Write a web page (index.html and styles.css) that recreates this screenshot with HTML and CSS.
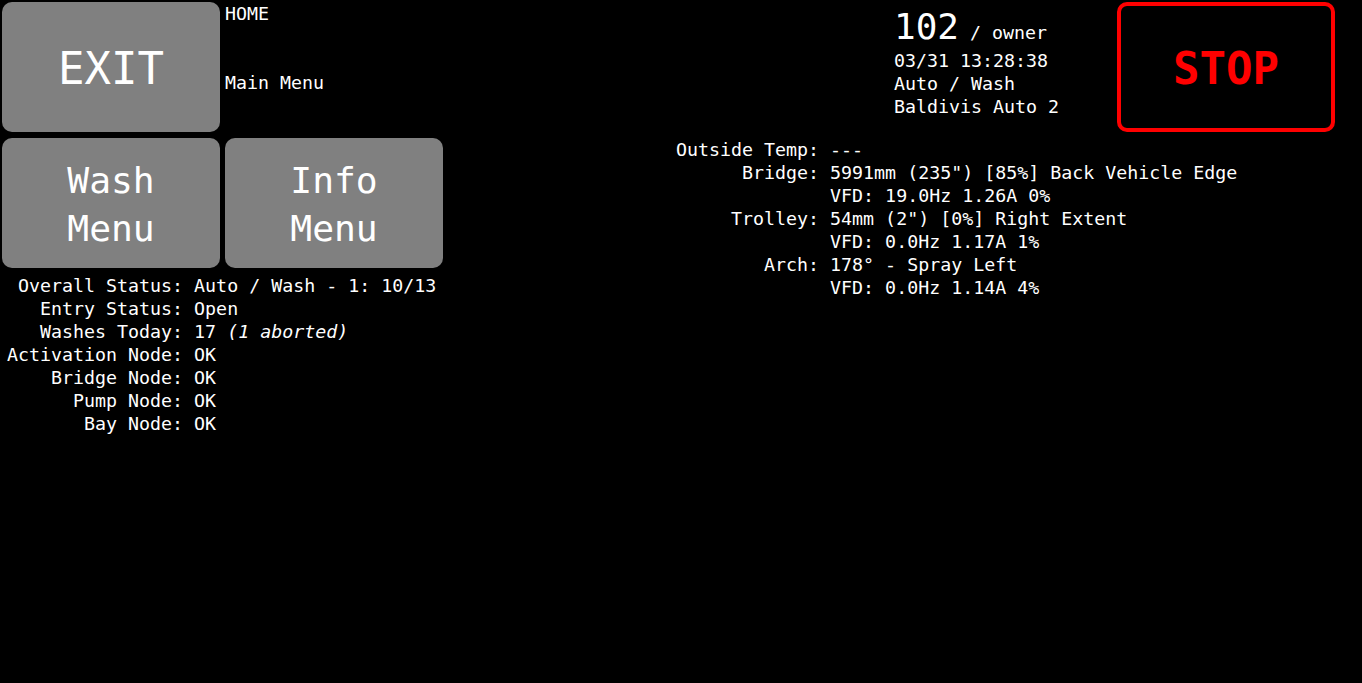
FILE: index.html
```html
<!DOCTYPE html>
<html lang="en">
  <head>
    <meta charset="UTF-8" />
    <meta name="viewport" content="width=device-width, initial-scale=1.0" />
    <title>Wash Bay - Home</title>
    <link rel="stylesheet" href="styles.css">
  </head>
  <body>
    <div class="screen">
      <button class="btn btn-big" id="exit">EXIT</button>

      <div class="crumbs">
        <div>HOME</div>
        <div class="crumb-sub">Main Menu</div>
      </div>

      <div class="ident">
        <div class="ident-top"><span class="bay-no">102</span> / owner</div>
        <div>03/31 13:28:38</div>
        <div>Auto / Wash</div>
        <div>Baldivis Auto 2</div>
      </div>

      <button class="btn btn-stop" id="stop">STOP</button>

      <button class="btn btn-menu">Wash<br />Menu</button>
      <button class="btn btn-menu">Info<br />Menu</button>

      <div class="readout readout-right">
        <div class="k">Outside Temp:</div><div>---</div>
        <div class="k">Bridge:</div><div>5991mm (235") [85%] Back Vehicle Edge</div>
        <div class="k"></div><div>VFD: 19.0Hz 1.26A 0%</div>
        <div class="k">Trolley:</div><div>54mm (2") [0%] Right Extent</div>
        <div class="k"></div><div>VFD: 0.0Hz 1.17A 1%</div>
        <div class="k">Arch:</div><div>178° - Spray Left</div>
        <div class="k"></div><div>VFD: 0.0Hz 1.14A 4%</div>
      </div>

      <div class="readout readout-left">
        <div class="k">Overall Status:</div><div>Auto / Wash - 1: 10/13</div>
        <div class="k">Entry Status:</div><div>Open</div>
        <div class="k">Washes Today:</div><div>17 <i>(1 aborted)</i></div>
        <div class="k">Activation Node:</div><div>OK</div>
        <div class="k">Bridge Node:</div><div>OK</div>
        <div class="k">Pump Node:</div><div>OK</div>
        <div class="k">Bay Node:</div><div>OK</div>
      </div>
    </div>
  </body>
</html>
```

FILE: styles.css
```css
body {
  margin: 0;
  padding: 0;
  background-color: #000;
  color: #fff;
  font-family: "DejaVu Sans Mono", "Liberation Mono", monospace;
  font-size: 18.3px;
  line-height: 23px;
}
.screen {
  display: grid;
  grid-template-columns: repeat(6, 218px);
  grid-template-rows: 130px 130px auto;
  column-gap: 5px;
  row-gap: 6px;
  padding: 2px;
}
.btn {
  display: flex;
  align-items: center;
  justify-content: center;
  margin: 0;
  padding: 0;
  border: none;
  border-radius: 10px;
  background-color: #808080;
  color: #fff;
  font-family: inherit;
  cursor: pointer;
}
.btn-big {
  font-size: 44px;
  line-height: 50px;
  padding-top: 4px;
}
.btn-menu {
  font-size: 36.3px;
  line-height: 48px;
  padding-top: 3px;
}
.btn-stop {
  grid-column: 6;
  background-color: #000;
  border: 4px solid #f00;
  color: #f00;
  font-size: 44px;
  line-height: 50px;
  font-weight: bold;
  padding-top: 4px;
}
.crumb-sub {
  margin-top: 46px;
}
.ident {
  grid-column: 5;
}
.ident-top {
  height: 40px;
  padding-top: 7px;
  line-height: 46px;
}
.bay-no {
  font-size: 36px;
  line-height: 1;
}
.readout {
  display: grid;
  grid-template-columns: auto auto;
  justify-content: start;
  align-content: start;
  column-gap: 1ch;
  padding: 0 5px;
}
.readout .k {
  text-align: right;
}
.readout-right {
  grid-column: 4 / 7;
  grid-row: 2 / 4;
}
.readout-left {
  grid-column: 1 / 4;
  grid-row: 3;
}
```
